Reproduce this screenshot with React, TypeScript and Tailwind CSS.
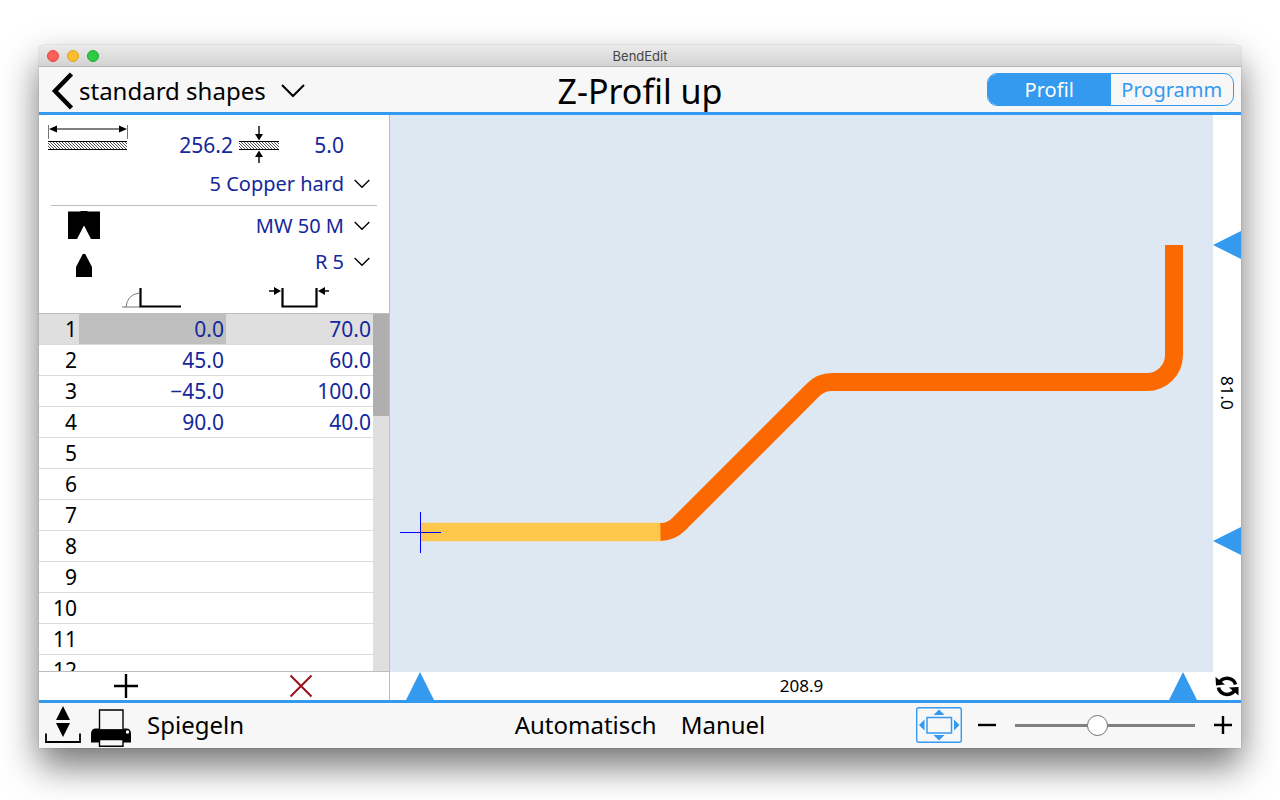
import { useState, type ReactNode } from "react";

const ROWS = [
  ["0.0", "70.0"],
  ["45.0", "60.0"],
  ["−45.0", "100.0"],
  ["90.0", "40.0"],
  ...Array.from({ length: 8 }, () => ["", ""]),
];

function Chevron({ className = "" }: { className?: string }) {
  return (
    <svg viewBox="0 0 24 14" className={className} fill="none" stroke="currentColor" strokeWidth="2">
      <path d="M1 1 12 12 23 1" />
    </svg>
  );
}

/* Borderless drop-down with its chevron to the right */
function Picker({ label, value }: { label: string; value: string }) {
  return (
    <label className="flex items-center gap-2.5 text-[#14289b]">
      <select
        aria-label={label}
        className="cursor-pointer appearance-none bg-transparent text-xl leading-7 [text-align-last:right] focus:outline-none"
      >
        <option>{value}</option>
      </select>
      <Chevron className="h-[10px] w-4 text-black" />
    </label>
  );
}

function IconButton({ label, className = "", children }: { label: string; className?: string; children: ReactNode }) {
  return (
    <button type="button" aria-label={label} className={`flex items-center justify-center ${className}`}>
      {children}
    </button>
  );
}

function TitleBar() {
  return (
    <div className="grid h-[22px] shrink-0 grid-cols-[1fr_auto_1fr] items-center border-b border-[#b4b4b4] bg-linear-to-b from-[#ebebeb] to-[#d3d3d3] px-2">
      <div className="flex gap-2">
        <button type="button" aria-label="Close" className="size-3 rounded-full border border-[#e2463f] bg-[#fc605b]" />
        <button type="button" aria-label="Minimize" className="size-3 rounded-full border border-[#dfa023] bg-[#fdbc2e]" />
        <button type="button" aria-label="Zoom" className="size-3 rounded-full border border-[#1fa830] bg-[#2fcb42]" />
      </div>
      <span className="font-['Inter',sans-serif] text-[13px] leading-5 text-[#444444]">BendEdit</span>
    </div>
  );
}

function Header() {
  const [tab, setTab] = useState("Profil");
  return (
    <header className="grid h-12 shrink-0 grid-cols-[1fr_auto_1fr] items-center border-b-3 border-[#339af0] bg-[#f7f7f7]">
      <div className="flex items-center pt-0.5 pl-3">
        <IconButton label="Back">
          <svg viewBox="0 0 24 38" className="h-[38px] w-6" fill="none" stroke="#000" strokeWidth="4.5">
            <path d="M20.500 2 4 19 20.500 36" />
          </svg>
        </IconButton>
        <label className="flex items-center gap-[15px] pl-1">
          <select
            aria-label="Shape library"
            className="cursor-pointer appearance-none bg-transparent text-2xl leading-8 focus:outline-none"
          >
            <option>standard shapes</option>
          </select>
          <Chevron className="h-[14px] w-6" />
        </label>
      </div>
      <h1 className="pt-0.5 text-[34px] leading-10">Z-Profil up</h1>
      <div className="mr-[7px] flex h-[33px] w-[247px] justify-self-end overflow-hidden rounded-[10px] border border-[#339af0] text-xl">
        {["Profil", "Programm"].map((name) => (
          <button
            key={name}
            type="button"
            aria-pressed={tab === name}
            onClick={() => setTab(name)}
            className={`flex-1 leading-7 ${tab === name ? "bg-[#339af0] text-white" : "text-[#339af0]"}`}
          >
            {name}
          </button>
        ))}
      </div>
    </header>
  );
}

function Hatch({ id }: { id: string }) {
  return (
    <defs>
      <pattern id={id} width="3" height="3" patternUnits="userSpaceOnUse">
        <path d="M-1 -1 4 4M-1 2 1 4M2 -1 4 1" stroke="#222" strokeWidth="0.8" />
      </pattern>
    </defs>
  );
}

function Material() {
  return (
    <>
      <div className="flex h-[50px] items-center pt-2.5 pl-[9px]">
        <svg viewBox="0 0 80 40" className="h-10 w-20 shrink-0">
          <Hatch id="hatch-length" />
          <path d="M.5 0V14M79.500 0V14" stroke="#777" />
          <path d="M6 4H74" stroke="#000" />
          <path d="M1 4 9 .5V7.500ZM79 4 71 .5V7.500Z" />
          <path d="M0 16H79V24H0Z" fill="url(#hatch-length)" />
          <path d="M0 16.500H79M0 24.500H79" stroke="#000" />
        </svg>
        <input
          aria-label="Blank length"
          defaultValue="256.2"
          className="w-[105px] bg-transparent text-right text-[21px] leading-7 text-[#14289b] focus:outline-none"
        />
        <svg viewBox="0 0 40 40" className="ml-1.5 h-10 w-10 shrink-0">
          <Hatch id="hatch-thickness" />
          <path d="M0 16H40V24H0Z" fill="url(#hatch-thickness)" />
          <path d="M0 16.500H40M0 24.500H40" stroke="#000" />
          <path d="M20 1V10M20 38V30" stroke="#000" strokeWidth="1.4" />
          <path d="M16 9H24L20 15.500ZM16 32H24L20 25.500Z" />
        </svg>
        <input
          aria-label="Thickness"
          defaultValue="5.0"
          className="w-[65px] bg-transparent text-right text-[21px] leading-7 text-[#14289b] focus:outline-none"
        />
      </div>
      <div className="flex h-[38px] items-center justify-end pr-[19px]">
        <Picker label="Material" value="5 Copper hard" />
      </div>
    </>
  );
}

function Tools() {
  return (
    <>
      <div className="mx-3 mt-0.5 border-t border-[#bdbdbd]" />
      <div className="flex h-10 items-center justify-between pr-[19px] pl-[29px]">
        <svg viewBox="0 0 32 28" className="mb-0.5 h-7 w-8">
          <path d="M0 .5H12L13 0H19L20 .5H32V28H23L16 14.500 9 28H0Z" />
        </svg>
        <Picker label="Die" value="MW 50 M" />
      </div>
      <div className="flex h-8 items-center justify-between pr-[19px] pl-[37px]">
        <svg viewBox="0 0 16 24" className="mt-1.5 h-6 w-4">
          <path d="M6.500 1.500Q8 0 9.500 1.500L16 14V24H0V14Z" />
        </svg>
        <Picker label="Punch" value="R 5" />
      </div>
    </>
  );
}

function BendTable() {
  const [selected, setSelected] = useState(0);
  return (
    <>
      <div className="flex h-9 shrink-0 items-center justify-between border-b border-[#bdbdbd] pt-[5px] pr-[60px] pl-[82px]">
        <svg viewBox="0 0 62 22" className="h-[22px] w-[62px]" role="img" aria-label="Angle" fill="none">
          <path d="M1 20H19M5 20Q6 8 18 6" stroke="#777" />
          <path d="M19.500 1V19.500H60" stroke="#000" strokeWidth="2.2" />
        </svg>
        <svg viewBox="0 0 60 22" className="h-[22px] w-[60px]" role="img" aria-label="Leg length">
          <path d="M13.500 1V19.500H47.500V1" fill="none" stroke="#000" strokeWidth="2.2" />
          <path d="M0 4H6M54 4H60" stroke="#000" strokeWidth="1.600" />
          <path d="M5 0 12 4 5 8ZM56 0 49 4 56 8Z" />
        </svg>
      </div>
      <div className="flex min-h-0 flex-1 basis-0 overflow-hidden">
        <div className="min-w-0 flex-1">
          <table className="w-full table-fixed border-separate border-spacing-0 text-right text-[21px] leading-[30px] [&_td]:border-b [&_td]:border-[#dcdcdc] [&_th]:border-b [&_th]:border-[#dcdcdc]">
            <colgroup>
              <col className="w-10" />
              <col />
              <col />
            </colgroup>
            <tbody>
              {ROWS.map(([angle, leg], i) => (
                <tr key={i} onClick={() => setSelected(i)} className={`h-[31px] ${i === selected ? "bg-[#dfdfdf]" : ""}`}>
                  <th scope="row" className="p-0 pr-0.5 font-normal">{i + 1}</th>
                  <td className={`p-0 pr-0.5 text-[#14289b] ${i === selected ? "bg-[#bfbfbf]" : ""}`}>{angle}</td>
                  <td className="p-0 pr-0.5 text-[#14289b]">{leg}</td>
                </tr>
              ))}
            </tbody>
          </table>
        </div>
        <div className="w-4 shrink-0 bg-[#dfdfdf]">
          <div className="h-[102px] bg-[#afafaf]" />
        </div>
      </div>
      <div className="flex h-[29px] shrink-0 border-t border-[#bdbdbd] pr-px">
        <IconButton label="Add bend" className="flex-1">
          <svg viewBox="0 0 24 24" className="size-6" stroke="#000" strokeWidth="2.400">
            <path d="M12 0V24M0 12H24" />
          </svg>
        </IconButton>
        <IconButton label="Delete bend" className="flex-1">
          <svg viewBox="0 0 24 24" className="size-6" stroke="#9b1118" strokeWidth="2">
            <path d="M1.500 1.500 22.500 22.500M22.500 1.500 1.500 22.500" />
          </svg>
        </IconButton>
      </div>
    </>
  );
}

function Drawing() {
  return (
    <svg viewBox="0 0 823 557" className="size-full bg-[#dee8f2]" fill="none" role="img" aria-label="Profile">
      <path d="M30 417H271" stroke="#fec84d" strokeWidth="18.500" />
      <path
        d="M270.500 417A27 27 0 0 0 289 409L423 275A27 27 0 0 1 442 267H757A27 27 0 0 0 784 240V130"
        stroke="#fc6900"
        strokeWidth="18"
      />
      <path d="M10 417.500H51M30.500 397V438" stroke="#0000ff" />
    </svg>
  );
}

function MarkerUp() {
  return (
    <svg viewBox="0 0 28 28" className="size-7 shrink-0" fill="#339af0">
      <path d="M14 0 28 28H0Z" />
    </svg>
  );
}

function MarkerLeft() {
  return (
    <svg viewBox="0 0 28 28" className="size-7 shrink-0" fill="#339af0">
      <path d="M0 14 28 0V28Z" />
    </svg>
  );
}

function Viewer() {
  return (
    <main className="grid min-w-0 flex-1 grid-cols-[1fr_28px] grid-rows-[1fr_28px] bg-white text-base">
      <div className="min-h-0 min-w-0">
        <Drawing />
      </div>
      <div className="flex flex-col items-center justify-between pt-[116px] pb-[117px]">
        <MarkerLeft />
        <span className="text-[17px] [writing-mode:vertical-rl]">81.0</span>
        <MarkerLeft />
      </div>
      <div className="flex items-center justify-between px-4">
        <MarkerUp />
        <span className="text-[17px]">208.9</span>
        <MarkerUp />
      </div>
      <IconButton label="Flip view">
        <svg viewBox="0 0 24 24" className="size-6" fill="none" stroke="#000" strokeWidth="3.600">
          <path d="M4 9.500A8.600 8 0 0 1 20.500 10.500M20.500 14A8.600 8 0 0 1 3.500 13.500" />
          <path d="M.5 3 1 11.500 10 10.500ZM23.500 21.500V13L14 13.500Z" fill="#000" stroke="none" />
        </svg>
      </IconButton>
    </main>
  );
}

function Toolbar() {
  const [zoom, setZoom] = useState(45);
  return (
    <footer className="grid h-12 shrink-0 grid-cols-[1fr_auto_1fr] items-center border-t-3 border-[#339af0] bg-[#f7f7f7] pb-0.5 text-2xl leading-8">
      <div className="flex items-center pl-1.5">
        <IconButton label="Unload">
          <svg viewBox="0 0 36 38" className="h-[38px] w-9">
            <path d="M18 0 25 14H11ZM18 31 25 17H11Z" />
            <path d="M1 27.500V36H35V27.500" fill="none" stroke="#000" strokeWidth="1.800" />
          </svg>
        </IconButton>
        <IconButton label="Print" className="ml-2.5">
          <svg viewBox="0 0 40 38" className="mt-1.5 h-[38px] w-10">
            <path d="M8.500 1H32V21H8.500Z" fill="#f7f7f7" stroke="#000" strokeWidth="1.400" />
            <path d="M4 19.500H8V20.500H32.500V19.500H36Q40 20 40 25V33.500H0V25Q0 20 4 19.500Z" />
            <circle cx="36.500" cy="23" r="1.700" fill="#fff" />
            <path d="M8.500 30.500H32V37.300H8.500Z" fill="#f7f7f7" stroke="#000" strokeWidth="1.400" />
          </svg>
        </IconButton>
        <button type="button" className="ml-4">Spiegeln</button>
      </div>
      <div className="flex gap-6">
        <button type="button">Automatisch</button>
        <button type="button">Manuel</button>
      </div>
      <div className="flex items-center justify-end pr-[9px]">
        <IconButton label="Fit to window" className="mr-4">
          <svg viewBox="0 0 46 36" className="h-9 w-[46px]" fill="none" stroke="#339af0">
            <rect x="0.700" y="0.700" width="44.600" height="34.600" rx="2" strokeWidth="1.400" />
            <rect x="11" y="10.500" width="24.500" height="15.500" strokeWidth="1.500" />
            <path
              d="M23 2.500 28.500 8H17.500ZM23 33.500 28.500 28H17.500ZM3 18 8.500 12.500V23.500ZM43.500 18 38 12.500V23.500Z"
              fill="#339af0"
              stroke="none"
            />
          </svg>
        </IconButton>
        <IconButton label="Zoom out">
          <svg viewBox="0 0 18 18" className="size-[18px]" stroke="#000" strokeWidth="2.400">
            <path d="M0 9H18" />
          </svg>
        </IconButton>
        <input
          type="range"
          aria-label="Zoom"
          min={0}
          max={100}
          value={zoom}
          onChange={(e) => setZoom(Number(e.target.value))}
          className="mx-[19px] h-[21px] w-[180px] cursor-pointer appearance-none bg-transparent [&::-webkit-slider-runnable-track]:h-[3px] [&::-webkit-slider-runnable-track]:bg-[#808080] [&::-webkit-slider-thumb]:-mt-[9px] [&::-webkit-slider-thumb]:size-[21px] [&::-webkit-slider-thumb]:appearance-none [&::-webkit-slider-thumb]:rounded-full [&::-webkit-slider-thumb]:border [&::-webkit-slider-thumb]:border-[#707070] [&::-webkit-slider-thumb]:bg-white"
        />
        <IconButton label="Zoom in">
          <svg viewBox="0 0 18 18" className="size-[18px]" stroke="#000" strokeWidth="2.400">
            <path d="M0 9H18M9 0V18" />
          </svg>
        </IconButton>
      </div>
    </footer>
  );
}

export default function App() {
  return (
    <div className="flex min-h-screen flex-col bg-white px-[39px] pt-[45px] pb-[52px] font-['Noto_Sans',sans-serif] text-black">
      <div className="flex flex-1 flex-col overflow-hidden rounded-t-[5px] shadow-[0_0_1px_rgba(0,0,0,0.5),0_18px_36px_rgba(0,0,0,0.55)]">
        <TitleBar />
        <Header />
        <div className="flex flex-1">
          <aside className="flex w-[351px] shrink-0 flex-col border-r border-[#bdbdbd] bg-white">
            <Material />
            <Tools />
            <BendTable />
          </aside>
          <Viewer />
        </div>
        <Toolbar />
      </div>
    </div>
  );
}
